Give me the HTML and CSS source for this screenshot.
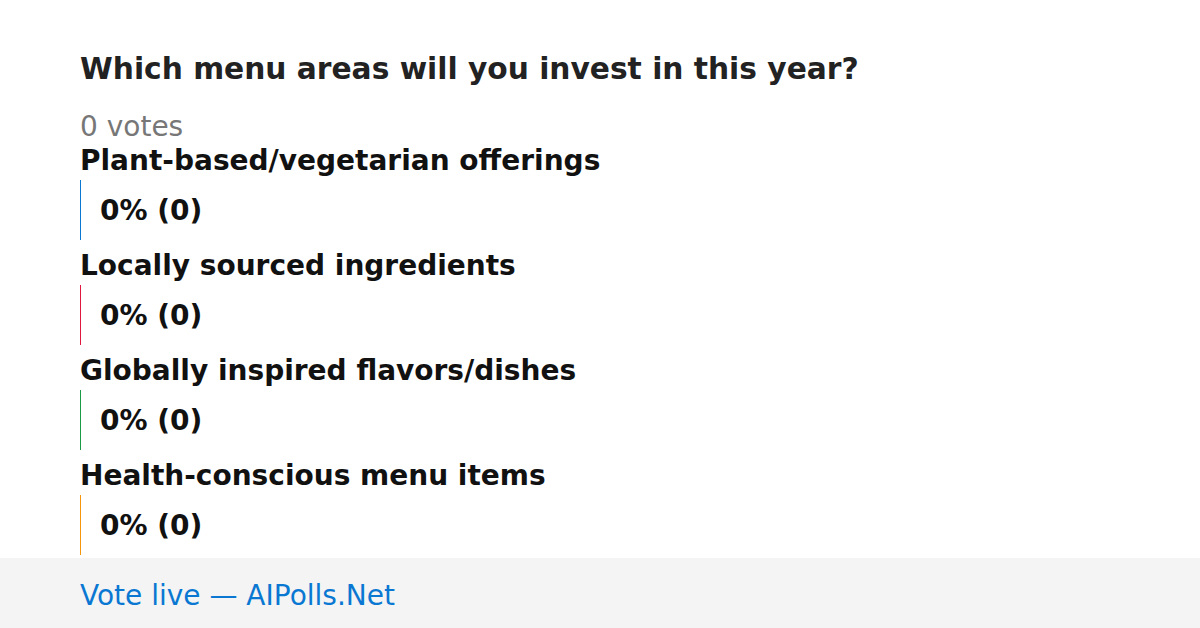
FILE: index.html
```html
<!DOCTYPE html>
<html>
    <head>
        <meta charset="UTF-8">
        <meta name="viewport" content="width=device-width, initial-scale=1.0">
        <title>Which menu areas will you invest in this year?</title>
        <link rel="stylesheet" href="styles.css">
    </head>

    <body>
        <div id="poll">
            <h1>Which menu areas will you invest in this year?</h1>
            <div class="votes">0 votes</div>

            <div class="option">
                <div class="option-label">Plant-based/vegetarian offerings</div>
                <div class="bar bar-blue">0% (0)</div>
            </div>

            <div class="option">
                <div class="option-label">Locally sourced ingredients</div>
                <div class="bar bar-red">0% (0)</div>
            </div>

            <div class="option">
                <div class="option-label">Globally inspired flavors/dishes</div>
                <div class="bar bar-green">0% (0)</div>
            </div>

            <div class="option">
                <div class="option-label">Health-conscious menu items</div>
                <div class="bar bar-orange">0% (0)</div>
            </div>
        </div>

        <div id="footer">Vote live — AIPolls.Net</div>
    </body>
</html>
```

FILE: styles.css
```css
body {
    font-family: 'DejaVu Sans', 'Liberation Sans', sans-serif;
    background: #fff;
    margin: 0;
    padding: 0;
    height: 628px;
    overflow: hidden;
    display: flex;
    flex-direction: column;
}
#poll {
    flex: 1;
    padding: 52px 80px 0;
}
h1 {
    margin: 0;
    font-size: 29.7px;
    line-height: 34px;
    color: #222;
}
.votes {
    margin-top: 26px;
    font-size: 28px;
    line-height: 30px;
    color: #777;
}
.option {
    margin-bottom: 10px;
}
.option:last-child {
    margin-bottom: 0;
}
.option-label {
    font-size: 28px;
    font-weight: bold;
    line-height: 30px;
    color: #111;
    padding-top: 1px;
    margin-top: 3px;
    margin-bottom: 4px;
}
.option + .option .option-label {
    margin-top: 0;
}
.bar {
    height: 60px;
    display: flex;
    align-items: center;
    padding-left: 19px;
    border-left: 1px solid #0a78d2;
    font-size: 28px;
    font-weight: bold;
    color: #111;
}
.bar-blue { border-color: #0a78d2; }
.bar-red { border-color: #e3173e; }
.bar-green { border-color: #1a9a45; }
.bar-orange { border-color: #f5960a; }
#footer {
    height: 70px;
    flex-shrink: 0;
    box-sizing: border-box;
    padding-top: 4px;
    background-color: #f4f4f4;
    display: flex;
    align-items: center;
    padding-left: 80px;
    font-size: 28px;
    color: #0a78d2;
}
```
